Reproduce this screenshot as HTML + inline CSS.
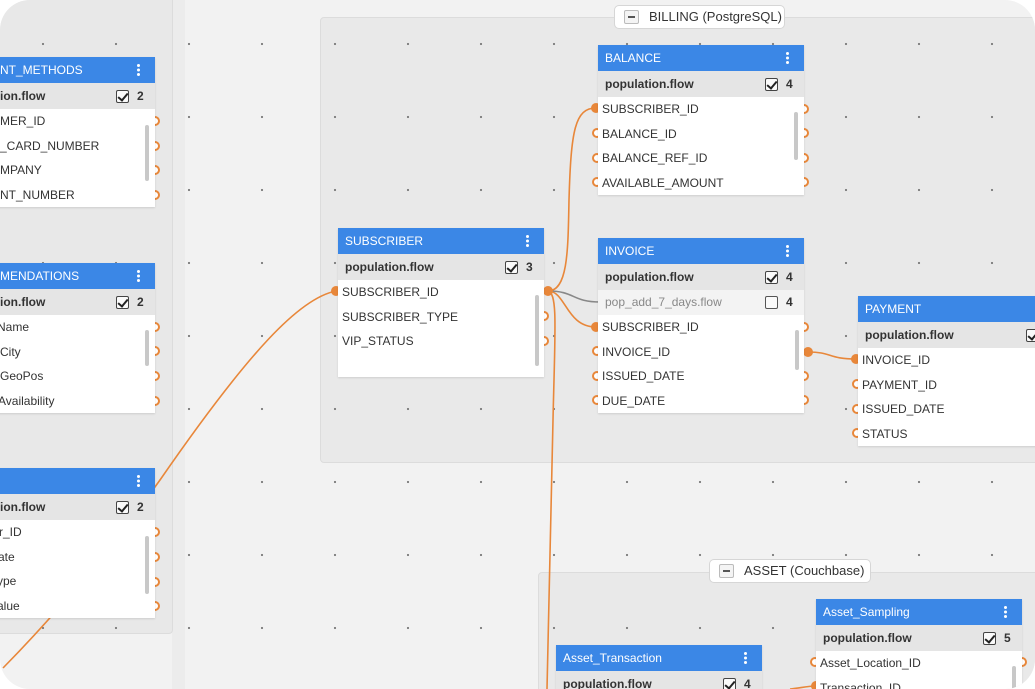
<!DOCTYPE html>
<html><head><meta charset="utf-8"><style>
*{box-sizing:border-box;margin:0;padding:0}
html,body{width:1035px;height:689px;background:#fff;overflow:hidden}
#c{position:absolute;left:0;top:0;width:1035px;height:689px;border-radius:30px;overflow:hidden;background:#f2f2f2;font-family:"Liberation Sans",sans-serif;font-size:12px;color:#333}
.abs{position:absolute}
.grp{position:absolute;background:#e9e9e9;border:1px solid #dcdcdc;border-radius:4px}
.dots{position:absolute;left:0;top:0;width:1035px;height:689px;background-image:radial-gradient(circle,#7a7a7a 0.9px,transparent 1.3px);background-size:73px 73px;background-position:6.5px 7.5px}
.lbl{position:absolute;background:#fff;border:1px solid #d6d6d6;border-radius:5px;height:24px;font-size:13px;line-height:22px;color:#333;padding-left:34px}
.lbl i{position:absolute;left:9px;top:4px;width:15px;height:14px;border:1px solid #bbb;border-radius:2px;background:#f4f4f4}
.lbl i:after{content:"";position:absolute;left:3px;top:5px;width:7px;height:2px;background:#555}
.t{position:absolute;width:206px;background:#fff;box-shadow:0 1px 2px rgba(0,0,0,.12)}
.h{height:26px;background:#3b87e6;color:#fff;line-height:26px;padding-left:7px;position:relative;white-space:nowrap;overflow:hidden}
.h b{position:absolute;right:15px;top:7px;width:3px;height:3px;background:#fff;border-radius:50%;box-shadow:0 4.5px 0 #fff,0 9px 0 #fff}
.s{height:26px;background:#e5e5e5;font-weight:bold;line-height:26px;padding-left:7px;position:relative;white-space:nowrap;overflow:hidden}
.s2{height:25px;background:#f3f3f3;color:#888;line-height:25px;padding-left:7px;position:relative}
.cb{position:absolute;left:167px;top:7px;width:13px;height:13px;border:1px solid #444;border-radius:2px;background:#fafafa}
.cb.k:after{content:"";position:absolute;left:3px;top:0px;width:4px;height:8px;border:solid #222;border-width:0 2px 2px 0;transform:rotate(40deg)}
.n{position:absolute;left:188px;top:0;font-weight:bold;color:#333}
.r{height:24.5px;line-height:24.5px;padding-left:4px;white-space:nowrap;overflow:hidden}
.L .h,.L .s,.L .r{padding-left:51px}
.sb{position:absolute;width:4px;background:#c8c8c8;border-radius:2px}
.p{position:absolute;width:10px;height:10px;border:2px solid #e8873a;border-radius:50%;background:#fff}
.pf{position:absolute;width:10px;height:10px;border-radius:50%;background:#e8873a}
</style></head><body><div id="c">
<div class="abs" style="left:172px;top:0;width:13px;height:689px;background:#ececec"></div>
<div class="grp" style="left:-10px;top:-10px;width:183px;height:644px;background:#e8e8e8"></div>
<div class="grp" style="left:320px;top:17px;width:730px;height:446px"></div>
<div class="grp" style="left:538px;top:572px;width:520px;height:140px"></div>
<div class="dots"></div>
<div class="lbl" style="left:614px;top:5px;width:171px"><i></i>BILLING (PostgreSQL)</div>
<div class="lbl" style="left:709px;top:559px;width:162px"><i></i>ASSET (Couchbase)</div>

<div class="p" style="left:150px;top:116px"></div><div class="p" style="left:150px;top:141px"></div><div class="p" style="left:150px;top:165px"></div><div class="p" style="left:150px;top:190px"></div>
<div class="p" style="left:150px;top:322px"></div><div class="p" style="left:150px;top:346px"></div><div class="p" style="left:150px;top:371px"></div><div class="p" style="left:150px;top:396px"></div>
<div class="p" style="left:150px;top:527px"></div><div class="p" style="left:150px;top:552px"></div><div class="p" style="left:150px;top:577px"></div><div class="p" style="left:150px;top:601px"></div>
<div class="p" style="left:539px;top:311px"></div><div class="p" style="left:539px;top:336px"></div>
<div class="p" style="left:592px;top:128px"></div><div class="p" style="left:592px;top:153px"></div><div class="p" style="left:592px;top:177px"></div>
<div class="p" style="left:799px;top:104px"></div><div class="p" style="left:799px;top:128px"></div><div class="p" style="left:799px;top:153px"></div><div class="p" style="left:799px;top:177px"></div>
<div class="p" style="left:592px;top:346px"></div><div class="p" style="left:592px;top:371px"></div><div class="p" style="left:592px;top:395px"></div>
<div class="p" style="left:799px;top:322px"></div><div class="p" style="left:799px;top:371px"></div><div class="p" style="left:799px;top:395px"></div>
<div class="p" style="left:852px;top:379px"></div><div class="p" style="left:852px;top:404px"></div><div class="p" style="left:852px;top:428px"></div>
<div class="p" style="left:810px;top:657px"></div><div class="p" style="left:1017px;top:657px"></div>

<svg class="abs" style="left:0;top:0" width="1035" height="689">
<g fill="none" stroke="#e8873a" stroke-width="1.6">
<path d="M336,291 C300,298 250,350 160,480 C110,550 60,610 3,668"/>
<path d="M548,291 C568,291 568,250 569,200 C571,130 575,108 596,108"/>
<path d="M548,291 C566,291 566,327 596,327"/>
<path d="M548,291 C558,293 555,330 553,420 L547,689"/>
<path d="M808,352 C832,352 828,359 856,359"/>
<path d="M816,686 C808,686 800,688 790,689"/>
</g>
<path d="M548,291 C575,291 572,302 600,302" fill="none" stroke="#888" stroke-width="1.6"/>
</svg>
<div class="pf" style="left:331px;top:286px"></div>
<div class="pf" style="left:543px;top:286px"></div>
<div class="pf" style="left:591px;top:103px"></div>
<div class="pf" style="left:591px;top:322px"></div>
<div class="pf" style="left:803px;top:347px"></div>
<div class="pf" style="left:851px;top:354px"></div>
<div class="pf" style="left:811px;top:681px"></div>

<div class="t L" style="left:-51px;top:57px"><div class="h">NT_METHODS<b></b></div><div class="s">ion.flow<i class="cb k"></i><span class="n">2</span></div>
<div class="r">MER_ID</div><div class="r">_CARD_NUMBER</div><div class="r">MPANY</div><div class="r">NT_NUMBER</div><div class="sb" style="left:196px;top:68px;height:56px"></div></div>
<div class="t L" style="left:-51px;top:263px"><div class="h">MENDATIONS<b></b></div><div class="s">ion.flow<i class="cb k"></i><span class="n">2</span></div>
<div class="r" style="padding-left:48px">Name</div><div class="r">City</div><div class="r">GeoPos</div><div class="r" style="padding-left:49px">Availability</div><div class="sb" style="left:196px;top:67px;height:36px"></div></div>
<div class="t L" style="left:-51px;top:468px"><div class="h"><b></b></div><div class="s">ion.flow<i class="cb k"></i><span class="n">2</span></div>
<div class="r" style="padding-left:50px">r_ID</div><div class="r" style="padding-left:49px">ate</div><div class="r" style="padding-left:48px">ype</div><div class="r" style="padding-left:48px">alue</div><div class="sb" style="left:196px;top:68px;height:58px"></div></div>

<div class="t" style="left:338px;top:228px;height:149px"><div class="h">SUBSCRIBER<b></b></div><div class="s">population.flow<i class="cb k"></i><span class="n">3</span></div>
<div class="r">SUBSCRIBER_ID</div><div class="r">SUBSCRIBER_TYPE</div><div class="r">VIP_STATUS</div><div class="sb" style="left:197px;top:67px;height:71px"></div></div>
<div class="t" style="left:598px;top:45px"><div class="h">BALANCE<b></b></div><div class="s">population.flow<i class="cb k"></i><span class="n">4</span></div>
<div class="r">SUBSCRIBER_ID</div><div class="r">BALANCE_ID</div><div class="r">BALANCE_REF_ID</div><div class="r">AVAILABLE_AMOUNT</div><div class="sb" style="left:196px;top:67px;height:48px"></div></div>
<div class="t" style="left:598px;top:238px"><div class="h">INVOICE<b></b></div><div class="s">population.flow<i class="cb k"></i><span class="n">4</span></div>
<div class="s2">pop_add_7_days.flow<i class="cb" style="top:6px;border-color:#555"></i><span class="n" style="line-height:25px">4</span></div>
<div class="r">SUBSCRIBER_ID</div><div class="r">INVOICE_ID</div><div class="r">ISSUED_DATE</div><div class="r">DUE_DATE</div><div class="sb" style="left:197px;top:92px;height:40px"></div></div>
<div class="t" style="left:858px;top:296px;width:190px"><div class="h">PAYMENT</div><div class="s">population.flow<i class="cb k" style="left:168px"></i></div>
<div class="r">INVOICE_ID</div><div class="r">PAYMENT_ID</div><div class="r">ISSUED_DATE</div><div class="r">STATUS</div></div>

<div class="t" style="left:816px;top:599px;width:206px"><div class="h">Asset_Sampling<b></b></div><div class="s">population.flow<i class="cb k"></i><span class="n">5</span></div>
<div class="r">Asset_Location_ID</div><div class="r">Transaction_ID</div><div class="sb" style="left:196px;top:67px;height:30px"></div></div>
<div class="t" style="left:556px;top:645px"><div class="h">Asset_Transaction<b></b></div><div class="s">population.flow<i class="cb k"></i><span class="n">4</span></div></div>
</div></body></html>
